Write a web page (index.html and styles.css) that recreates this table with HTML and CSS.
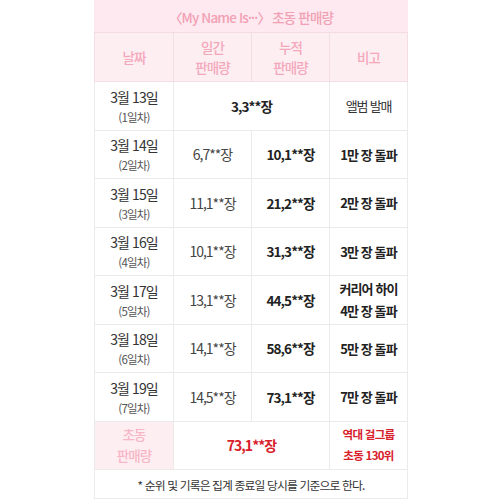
FILE: index.html
```html
<!DOCTYPE html>
<html lang="ko">
<head>
<meta charset="utf-8">
<link rel="stylesheet" href="styles.css">
</head>
<body>
<div class="wrap">
<table class="sales">
  <colgroup><col class="c1"><col class="c2"><col class="c3"><col class="c4"></colgroup>
  <thead>
    <tr class="title"><th colspan="4">〈My Name Is···〉 초동 판매량</th></tr>
    <tr class="head"><th>날짜</th><th>일간<br>판매량</th><th>누적<br>판매량</th><th>비고</th></tr>
  </thead>
  <tbody>
    <tr><td class="date"><b>3월 13일</b><span>(1일차)</span></td><td colspan="2" class="cum">3,3**장</td><td class="note">앨범 발매</td></tr>
    <tr><td class="date"><b>3월 14일</b><span>(2일차)</span></td><td class="day">6,7**장</td><td class="cum">10,1**장</td><td class="note b">1만 장 돌파</td></tr>
    <tr><td class="date"><b>3월 15일</b><span>(3일차)</span></td><td class="day">11,1**장</td><td class="cum">21,2**장</td><td class="note b">2만 장 돌파</td></tr>
    <tr><td class="date"><b>3월 16일</b><span>(4일차)</span></td><td class="day">10,1**장</td><td class="cum">31,3**장</td><td class="note b">3만 장 돌파</td></tr>
    <tr><td class="date"><b>3월 17일</b><span>(5일차)</span></td><td class="day">13,1**장</td><td class="cum">44,5**장</td><td class="note b two">커리어 하이<br>4만 장 돌파</td></tr>
    <tr><td class="date"><b>3월 18일</b><span>(6일차)</span></td><td class="day">14,1**장</td><td class="cum">58,6**장</td><td class="note b">5만 장 돌파</td></tr>
    <tr><td class="date"><b>3월 19일</b><span>(7일차)</span></td><td class="day">14,5**장</td><td class="cum">73,1**장</td><td class="note b">7만 장 돌파</td></tr>
    <tr class="total"><th>초동<br>판매량</th><td colspan="2" class="sum">73,1**장</td><td class="rec">역대 걸그룹<br>초동 130위</td></tr>
  </tbody>
  <tfoot>
    <tr><td colspan="4" class="foot">* 순위 및 기록은 집계 종료일 당시를 기준으로 한다.</td></tr>
  </tfoot>
</table>
</div>
</body>
</html>
```
FILE: styles.css
```css
html, body { margin: 0; padding: 0; background: #fff; }
body { font-family: "Noto Sans CJK KR", "Noto Sans", sans-serif; }
.wrap { padding: 0 0 0 94px; }
.sales {
  width: 313px;
  border-collapse: collapse;
  table-layout: fixed;
}
.c1 { width: 79px; }
.c2 { width: 78px; }
.c3 { width: 78px; }
.c4 { width: 78px; }
.sales th, .sales td {
  border: 1px solid #ebebeb;
  text-align: center;
  vertical-align: middle;
  padding: 0;
}
.title th {
  background: #fde9ef;
  color: #f2a0b4;
  font-weight: 500;
  font-size: 13.5px;
  letter-spacing: -0.85px;
  height: 31px;
  line-height: 18px;
  border-color: #fde9ef;
  border-bottom-color: #f3dbe2;
}
.head th {
  background: #fdeef2;
  color: #f4a8bb;
  font-weight: 500;
  font-size: 13.5px;
  letter-spacing: -0.9px;
  line-height: 20px;
  height: 48px;
  border-color: #f3dee4;
}
tbody tr { height: 48.5px; }
.date { color: #333; }
.date b {
  display: block;
  font-weight: 400;
  font-size: 14px;
  letter-spacing: -0.9px;
  line-height: 22px;
}
.date span {
  display: block;
  font-size: 11.5px;
  letter-spacing: -0.8px;
  line-height: 18px;
  color: #555;
}
.day { color: #444; font-size: 14px; letter-spacing: -1px; }
.cum { color: #222; font-size: 13.5px; letter-spacing: -0.9px; font-weight: 700; }
.note { color: #333; font-size: 13px; letter-spacing: -1.2px; }
.note.b { font-weight: 700; color: #222; font-size: 13px; letter-spacing: -0.9px; }
.note.two { line-height: 22px; }
.total th {
  background: #fdeef2;
  color: #f7b6c6;
  font-weight: 500;
  font-size: 13.5px;
  letter-spacing: -0.9px;
  line-height: 21px;
  height: 47px;
}
.sum { color: #d8202b; font-size: 14px; letter-spacing: -1px; font-weight: 700; }
.rec { color: #d8202b; font-size: 11.5px; letter-spacing: -0.7px; font-weight: 700; line-height: 21px; }
.foot {
  height: 28px;
  color: #333;
  font-size: 11.8px;
  letter-spacing: -0.85px;
}
```
